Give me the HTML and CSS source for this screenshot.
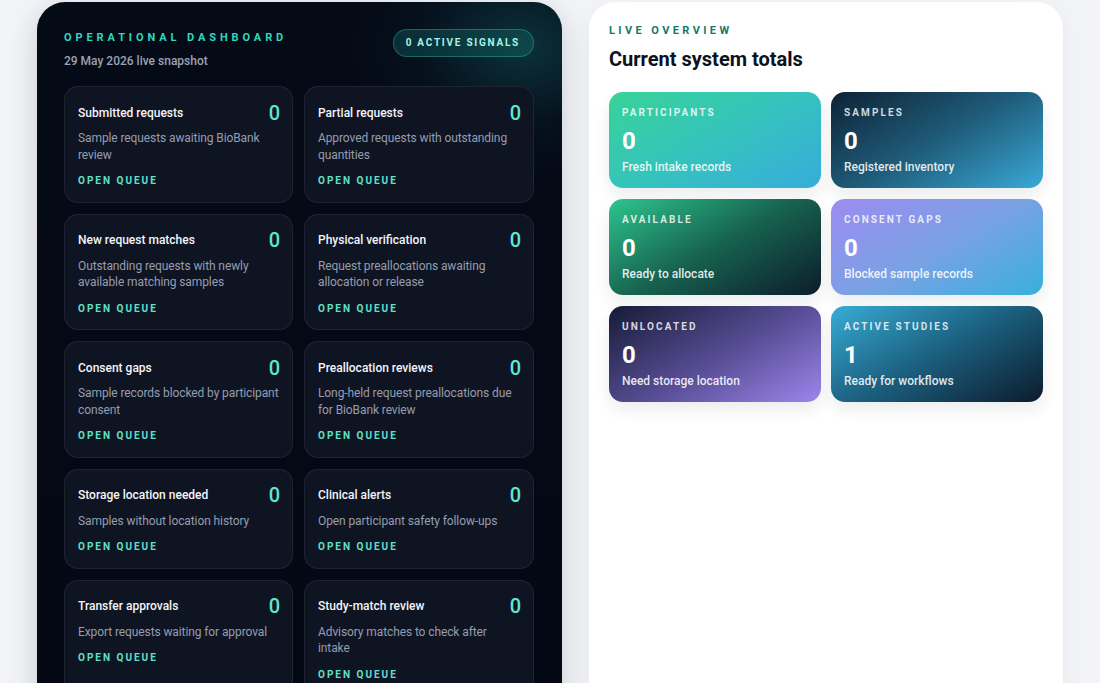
FILE: index.html
```html
<!DOCTYPE html>
<html lang="en">
<head>
<meta charset="utf-8">
<title>Operational Dashboard</title>
<link rel="stylesheet" href="styles.css">
</head>
<body>
<div class="page">
  <section class="ops">
    <header class="ops-head">
      <div>
        <div class="eyebrow">OPERATIONAL DASHBOARD</div>
        <div class="snapshot">29 May 2026 live snapshot</div>
      </div>
      <div class="badge">0 ACTIVE SIGNALS</div>
    </header>
    <div class="queue-grid">
      <div class="queue">
        <div class="q-top"><span class="q-title">Submitted requests</span><span class="q-count">0</span></div>
        <p class="q-desc">Sample requests awaiting BioBank review</p>
        <a class="q-link">OPEN QUEUE</a>
      </div>
      <div class="queue">
        <div class="q-top"><span class="q-title">Partial requests</span><span class="q-count">0</span></div>
        <p class="q-desc">Approved requests with outstanding quantities</p>
        <a class="q-link">OPEN QUEUE</a>
      </div>
      <div class="queue">
        <div class="q-top"><span class="q-title">New request matches</span><span class="q-count">0</span></div>
        <p class="q-desc">Outstanding requests with newly available matching samples</p>
        <a class="q-link">OPEN QUEUE</a>
      </div>
      <div class="queue">
        <div class="q-top"><span class="q-title">Physical verification</span><span class="q-count">0</span></div>
        <p class="q-desc">Request preallocations awaiting allocation or release</p>
        <a class="q-link">OPEN QUEUE</a>
      </div>
      <div class="queue">
        <div class="q-top"><span class="q-title">Consent gaps</span><span class="q-count">0</span></div>
        <p class="q-desc">Sample records blocked by participant consent</p>
        <a class="q-link">OPEN QUEUE</a>
      </div>
      <div class="queue">
        <div class="q-top"><span class="q-title">Preallocation reviews</span><span class="q-count">0</span></div>
        <p class="q-desc">Long-held request preallocations due for BioBank review</p>
        <a class="q-link">OPEN QUEUE</a>
      </div>
      <div class="queue">
        <div class="q-top"><span class="q-title">Storage location needed</span><span class="q-count">0</span></div>
        <p class="q-desc">Samples without location history</p>
        <a class="q-link">OPEN QUEUE</a>
      </div>
      <div class="queue">
        <div class="q-top"><span class="q-title">Clinical alerts</span><span class="q-count">0</span></div>
        <p class="q-desc">Open participant safety follow-ups</p>
        <a class="q-link">OPEN QUEUE</a>
      </div>
      <div class="queue">
        <div class="q-top"><span class="q-title">Transfer approvals</span><span class="q-count">0</span></div>
        <p class="q-desc">Export requests waiting for approval</p>
        <a class="q-link">OPEN QUEUE</a>
      </div>
      <div class="queue">
        <div class="q-top"><span class="q-title">Study-match review</span><span class="q-count">0</span></div>
        <p class="q-desc">Advisory matches to check after intake</p>
        <a class="q-link">OPEN QUEUE</a>
      </div>
    </div>
  </section>

  <section class="overview">
    <div class="ov-eyebrow">LIVE OVERVIEW</div>
    <h2 class="ov-title">Current system totals</h2>
    <div class="tiles">
      <div class="tile t-participants">
        <div class="t-label">PARTICIPANTS</div>
        <div class="t-value">0</div>
        <div class="t-sub">Fresh intake records</div>
      </div>
      <div class="tile t-samples">
        <div class="t-label">SAMPLES</div>
        <div class="t-value">0</div>
        <div class="t-sub">Registered inventory</div>
      </div>
      <div class="tile t-available">
        <div class="t-label">AVAILABLE</div>
        <div class="t-value">0</div>
        <div class="t-sub">Ready to allocate</div>
      </div>
      <div class="tile t-consent">
        <div class="t-label">CONSENT GAPS</div>
        <div class="t-value">0</div>
        <div class="t-sub">Blocked sample records</div>
      </div>
      <div class="tile t-unlocated">
        <div class="t-label">UNLOCATED</div>
        <div class="t-value">0</div>
        <div class="t-sub">Need storage location</div>
      </div>
      <div class="tile t-studies">
        <div class="t-label">ACTIVE STUDIES</div>
        <div class="t-value">1</div>
        <div class="t-sub">Ready for workflows</div>
      </div>
    </div>
  </section>
</div>
</body>
</html>
```

FILE: styles.css
```css
* { box-sizing: border-box; }
html, body {
  margin: 0;
  height: 100%;
  overflow: hidden;
}
body {
  background: #f2f4f7;
  font-family: Roboto, "Liberation Sans", Arial, sans-serif;
  -webkit-font-smoothing: antialiased;
}
.page {
  display: grid;
  grid-template-columns: 525px 474px;
  column-gap: 27px;
  padding: 2px 37px 0;
  align-items: start;
}

/* Dark operations panel */
.ops {
  background:
    radial-gradient(ellipse 170px 130px at 485px 45px, rgba(20, 105, 108, 0.42), rgba(10, 60, 70, 0.14) 60%, transparent 100%),
    linear-gradient(180deg, #050a17 0%, #040814 100%);
  border-radius: 28px 28px 0 0;
  padding: 29px 28px 40px 27px;
  min-height: 720px;
  box-shadow: 0 8px 30px rgba(15, 23, 42, 0.18);
}
.ops-head {
  display: flex;
  justify-content: space-between;
  align-items: flex-start;
}
.eyebrow {
  color: #2fd8bd;
  font-size: 11px;
  line-height: 14px;
  font-weight: 700;
  letter-spacing: 3.9px;
}
.snapshot {
  margin-top: 8px;
  color: #9aa3b4;
  font-size: 12px;
  line-height: 16px;
  font-weight: 500;
}
.badge {
  margin-top: -2px;
  height: 28px;
  padding: 0 13px 0 12px;
  border-radius: 14px;
  border: 1px solid rgba(45, 212, 191, 0.35);
  background: rgba(20, 110, 110, 0.35);
  color: #a7f3e4;
  font-size: 10px;
  font-weight: 700;
  letter-spacing: 1.75px;
  line-height: 26px;
}
.queue-grid {
  margin-top: 17px;
  display: grid;
  grid-template-columns: 229px 230px;
  column-gap: 11px;
  row-gap: 11px;
}
.queue {
  background: #0f1422;
  border: 1px solid rgba(255, 255, 255, 0.07);
  border-radius: 14px;
  padding: 15.5px 12px 13.5px 13px;
}
.q-top {
  display: flex;
  justify-content: space-between;
  align-items: center;
  height: 20px;
}
.q-title {
  color: #f3f5f9;
  font-size: 12px;
  font-weight: 500;
  line-height: 16px;
}
.q-count {
  color: #5fe6cf;
  font-size: 20px;
  font-weight: 500;
  line-height: 20px;
}
.q-desc {
  margin: 7.5px 0 0;
  color: #959daf;
  font-size: 12px;
  font-weight: 400;
  line-height: 16.5px;
  letter-spacing: -0.1px;
}
.q-link {
  display: block;
  margin-top: 11px;
  color: #5fe0c9;
  font-size: 10px;
  font-weight: 700;
  letter-spacing: 2px;
  line-height: 14px;
}

/* Overview panel */
.overview {
  background: #ffffff;
  border-radius: 26px 26px 0 0;
  padding: 23px 20px 40px;
  min-height: 720px;
  box-shadow: 0 6px 26px rgba(15, 23, 42, 0.05);
}
.ov-eyebrow {
  color: #137a66;
  font-size: 11px;
  line-height: 12px;
  font-weight: 700;
  letter-spacing: 3.4px;
}
.ov-title {
  margin: 9px 0 0;
  color: #0b1220;
  font-size: 20px;
  line-height: 26px;
  font-weight: 700;
}
.tiles {
  margin-top: 20px;
  display: grid;
  grid-template-columns: 212px 212px;
  column-gap: 10px;
  row-gap: 11px;
}
.tile {
  height: 96px;
  border-radius: 14px;
  padding: 15px 13px 13px;
  color: #fff;
  box-shadow: 0 8px 16px rgba(15, 23, 42, 0.08);
}
.t-label {
  font-size: 10px;
  line-height: 12px;
  font-weight: 700;
  letter-spacing: 2.1px;
  color: rgba(255, 255, 255, 0.82);
}
.t-value {
  margin-top: 8px;
  font-size: 24px;
  line-height: 28px;
  font-weight: 700;
}
.t-sub {
  margin-top: 4px;
  font-size: 12px;
  line-height: 16px;
  font-weight: 500;
  color: rgba(255, 255, 255, 0.88);
}
.t-participants { background: linear-gradient(150deg, #38d398 0%, #35c3bd 50%, #37acdc 100%); }
.t-samples { background: linear-gradient(150deg, #0e2235 0%, #1f5c7a 50%, #3aa9d8 100%); }
.t-available { background: linear-gradient(150deg, #2ec58d 0%, #17624f 50%, #0c1c2b 100%); }
.t-consent { background: linear-gradient(150deg, #9c8bf1 0%, #7ba1e4 50%, #38b0dc 100%); }
.t-unlocated { background: linear-gradient(150deg, #161b36 0%, #5a4f98 55%, #9d86ec 100%); }
.t-studies { background: linear-gradient(150deg, #38acd6 0%, #1b5f7e 50%, #0c1b2c 100%); }
```
